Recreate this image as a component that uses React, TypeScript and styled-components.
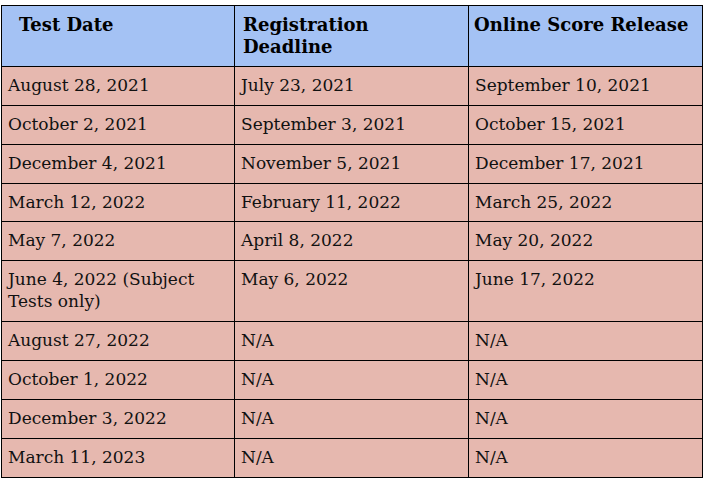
import React from 'react';
import styled, { createGlobalStyle } from 'styled-components';

const GlobalStyle = createGlobalStyle`
  html, body {
    margin: 0;
    padding: 0;
    background: #ffffff;
  }
  body {
    font-family: 'DejaVu Serif', 'Liberation Serif', Georgia, serif;
  }
`;

interface DateRow {
  test: string;
  deadline: string;
  release: string;
}

const rows: DateRow[] = [
  { test: 'August 28, 2021', deadline: 'July 23, 2021', release: 'September 10, 2021' },
  { test: 'October 2, 2021', deadline: 'September 3, 2021', release: 'October 15, 2021' },
  { test: 'December 4, 2021', deadline: 'November 5, 2021', release: 'December 17, 2021' },
  { test: 'March 12, 2022', deadline: 'February 11, 2022', release: 'March 25, 2022' },
  { test: 'May 7, 2022', deadline: 'April 8, 2022', release: 'May 20, 2022' },
  { test: 'June 4, 2022 (Subject Tests only)', deadline: 'May 6, 2022', release: 'June 17, 2022' },
  { test: 'August 27, 2022', deadline: 'N/A', release: 'N/A' },
  { test: 'October 1, 2022', deadline: 'N/A', release: 'N/A' },
  { test: 'December 3, 2022', deadline: 'N/A', release: 'N/A' },
  { test: 'March 11, 2023', deadline: 'N/A', release: 'N/A' },
];

const App: React.FC = () => {
  return (
    <>
      <GlobalStyle />
      <Page>
        <DatesTable>
          <colgroup>
            <Column $width={233} />
            <Column $width={234} />
            <Column $width={234} />
          </colgroup>
          <thead>
            <tr>
              <HeadCell $indent={17}>Test Date</HeadCell>
              <HeadCell>
                Registration
                <br />
                Deadline
              </HeadCell>
              <HeadCell $indent={5}>Online Score Release</HeadCell>
            </tr>
          </thead>
          <tbody>
            {rows.map((row) => (
              <tr key={row.test}>
                <Cell>{row.test}</Cell>
                <Cell>{row.deadline}</Cell>
                <Cell>{row.release}</Cell>
              </tr>
            ))}
          </tbody>
        </DatesTable>
      </Page>
    </>
  );
};

const Page = styled.div`
  padding: 5px 0 0 1px;
`;

const DatesTable = styled.table`
  width: 701px;
  border-collapse: collapse;
  table-layout: fixed;
`;

const Column = styled.col<{ $width: number }>`
  width: ${(p) => p.$width}px;
`;

const HeadCell = styled.th<{ $indent?: number }>`
  background-color: #a4c2f4;
  border: 1px solid #000;
  padding: 8px 4px 8px ${(p) => p.$indent ?? 8}px;
  text-align: left;
  vertical-align: top;
  font-size: 18px;
  line-height: 21.9px;
  font-weight: 700;
  color: #000;
  white-space: nowrap;
`;

const Cell = styled.td`
  background-color: #e6b8af;
  border: 1px solid #000;
  padding: 8px 6px;
  vertical-align: top;
  font-size: 17px;
  line-height: 21.9px;
  color: #111;
`;

export default App;
